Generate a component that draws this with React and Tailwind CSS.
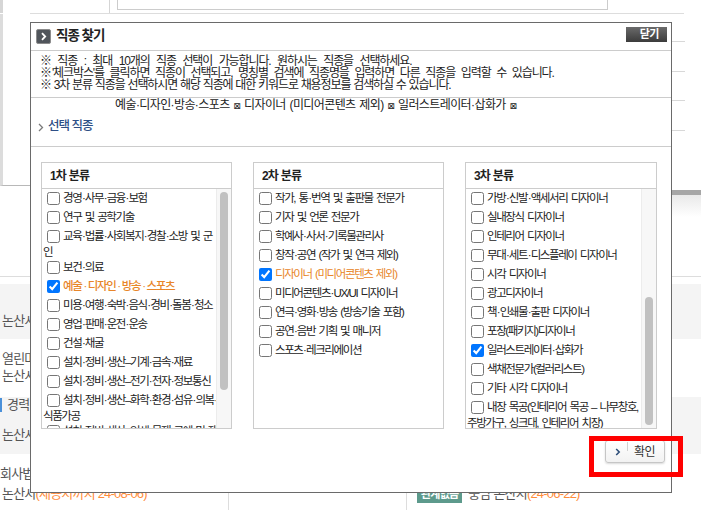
import React from "react";

const FONT = "font-['Liberation_Sans','Noto_Sans_CJK_KR',sans-serif]";

const D = () => <span className="mx-[0.5px]">·</span>;
const DW = () => <span className="mx-[2px]">·</span>;

function fmt(s) {
  if (typeof s !== "string") return s;
  const parts = s.split("·");
  const out = [];
  parts.forEach((p, i) => {
    if (i > 0) out.push(<D key={"d" + i} />);
    out.push(p);
  });
  return out;
}

function Item({ label, label2, checked, orange }) {
  return (
    <div className="leading-[12px] whitespace-nowrap">
      <input
        type="checkbox"
        defaultChecked={checked}
        className="align-middle w-[13px] h-[13px] mt-[3px] mb-[3px] ml-[4px] mr-[3px]"
      />
      <span className={orange ? "text-[#e8862a]" : "text-[#222]"}>
        {fmt(label)}
        {label2 && (
          <>
            <br />
            {fmt(label2)}
          </>
        )}
      </span>
    </div>
  );
}

function Panel({ title, items, width, thumb }) {
  return (
    <div className={`${width} h-[267px] border border-[#cccccc] flex flex-col bg-white`}>
      <div className="h-[26px] shrink-0 border-b border-[#cccccc] flex items-center pl-[8px] text-[12px] font-bold text-[#222] tracking-[-0.8px]">
        {title}
      </div>
      <div className="flex-1 flex min-h-0">
        <div className="flex-1 overflow-hidden text-[11.5px] tracking-[-1.4px] [word-spacing:1.5px] pl-[1px]">
          {items.map((it, i) => (
            <Item key={i} {...it} />
          ))}
        </div>
        {thumb && (
          <div className="w-[15px] shrink-0 bg-[#f7f7f7] border-l border-[#ececec] flex justify-center">
            <div className={`w-[8px] rounded-full bg-[#c1c1c1] ${thumb}`} />
          </div>
        )}
      </div>
    </div>
  );
}

const p1 = [
  { label: "경영·사무·금융·보험" },
  { label: "연구 및 공학기술" },
  { label: "교육·법률·사회복지·경찰·소방 및 군", label2: "인" },
  { label: "보건·의료" },
  {
    label: (
      <span className="font-medium">
        예술<DW />디자인<DW />방송<DW />스포츠
      </span>
    ),
    checked: true,
    orange: true,
  },
  { label: "미용·여행·숙박·음식·경비·돌봄·청소" },
  { label: "영업·판매·운전·운송" },
  { label: "건설·채굴" },
  { label: "설치·정비·생산–기계·금속·재료" },
  { label: "설치·정비·생산–전기·전자·정보통신" },
  { label: "설치·정비·생산–화학·환경·섬유·의복·", label2: "식품가공" },
  { label: "설치·정비·생산–인쇄·목재·공예 및 제조" },
];

const p2 = [
  { label: "작가, 통·번역 및 출판물 전문가" },
  { label: "기자 및 언론 전문가" },
  { label: "학예사·사서·기록물관리사" },
  { label: "창작·공연 (작가 및 연극 제외)" },
  { label: "디자이너 (미디어콘텐츠 제외)", checked: true, orange: true },
  { label: "미디어콘텐츠·UX/UI 디자이너" },
  { label: "연극·영화·방송 (방송기술 포함)" },
  { label: "공연·음반 기획 및 매니저" },
  { label: "스포츠·레크리에이션" },
];

const p3 = [
  { label: "가방·신발·액세서리 디자이너" },
  { label: "실내장식 디자이너" },
  { label: "인테리어 디자이너" },
  { label: "무대·세트·디스플레이 디자이너" },
  { label: "시각 디자이너" },
  { label: "광고디자이너" },
  { label: "책·인쇄물·출판 디자이너" },
  { label: "포장(패키지)디자이너" },
  { label: "일러스트레이터·삽화가", checked: true },
  { label: "색채전문가(컬러리스트)" },
  { label: "기타 시각 디자이너" },
  { label: "내장 목공(인테리어 목공 – 나무창호,", label2: "주방가구, 싱크대, 인테리어 치장)" },
];

function Background() {
  return (
    <div className="flex flex-col w-[701px] h-[510px] text-[13px] text-[#555] tracking-[-0.8px]">
      {/* top strip */}
      <div className="h-[13px] flex shrink-0">
        <div className="w-[110px] h-full border-r border-[#d5d5d5] border-l-[3px] border-l-[#d6d6d6]" />
        <div className="ml-[7px] w-[491px] h-[10px] border-x border-b border-[#cccccc]" />
      </div>
      <div className="h-[1px] ml-[30px] w-[654px] bg-[#dddddd] shrink-0" />
      {/* upper area */}
      <div className="h-[172px] flex shrink-0">
        <div className="w-[30px] h-full border-l-[3px] border-[#dcdcdc] border-b border-b-[#b8b8b8]" />
        <div className="ml-auto w-[30px] flex flex-col">
          <div className="w-[14px] h-[28px] border-b border-[#d8d8d8]" />
          <div className="w-[14px] h-[30px] border-b border-[#d8d8d8]" />
          <div className="w-[14px] h-[29px] border-b border-[#d8d8d8]" />
          <div className="w-[14px] h-[30px] border-b border-[#d8d8d8]" />
        </div>
      </div>
      <div className="h-[91px] flex shrink-0 border-b border-[#dddddd]">
        <div className="ml-auto w-[30px] flex flex-col">
          <div className="mt-[4px] h-[5px] bg-[#a6a6a6]" />
          <div className="h-[22px] bg-gradient-to-b from-[#e9e9e9] to-white" />
        </div>
      </div>
      <div className="h-[7px] shrink-0" />
      <div className="h-[55px] shrink-0 bg-[#f4f4f4] pt-[29px] pl-[2px] leading-[16px]">논산시</div>
      <div className="h-[58px] shrink-0 pt-[11px] pl-[2px] leading-[17px]">
        <div>열린마</div>
        <div>논산시</div>
      </div>
      <div className="h-[57px] shrink-0 bg-[#f4f4f4] leading-[16px]">
        <div className="flex items-center">
          <div className="w-[2px] h-[14px] bg-[#4a90d9]" />
          <span className="ml-[5px]">경력직</span>
        </div>
        <div className="mt-[14px] pl-[2px]">논산시</div>
      </div>
      <div className="flex-1 flex">
        <div className="w-[229px] border-r border-[#dddddd] pt-[10px] leading-[20px]">
          <div>회사법</div>
          <div className="pl-[2px]">
            논산시<span className="text-[#ff8c3a]">(채용시까지 24-08-06)</span>
          </div>
        </div>
        <div className="w-[178px] border-r border-[#dddddd]" />
        <div className="pt-[30px] pl-[10px] leading-[20px] flex items-center self-start">
          <span className="bg-[#5d9a8c] text-white text-[11px] font-bold px-[4px] leading-[17px]">
            관계없음
          </span>
          <span className="ml-[6px]">
            충남 논산시<span className="text-[#ff8c3a]">(24-06-22)</span>
          </span>
        </div>
      </div>
    </div>
  );
}

const X = () => <span className="font-['DejaVu_Sans'] text-[9px]">⊠</span>;

export default function App() {
  return (
    <div className={`relative w-[701px] h-[510px] overflow-hidden bg-white ${FONT}`}>
      <Background />

      {/* Modal */}
      <div className="absolute left-[30px] top-[22px] w-[642px] h-[471px] border border-[#6a6a6a] bg-white flex flex-col">
        {/* header */}
        <div className="h-[28px] shrink-0 border-b border-[#cccccc] flex items-center pl-[5px] pr-[4px]">
          <svg width="15" height="15" viewBox="0 0 15 15" className="shrink-0">
            <rect x="0.5" y="0.5" width="14" height="14" rx="1.5" fill="#50555b" stroke="#8c8c8c" />
            <path d="M6 4.2 L9.2 7.5 L6 10.8" fill="none" stroke="#ffffff" strokeWidth="1.8" />
          </svg>
          <span className="ml-[5px] text-[13.5px] font-bold text-[#222] tracking-[-1px]">직종 찾기</span>
          <div className="ml-auto self-start mt-[4px] w-[41px] h-[15px] bg-gradient-to-b from-[#6b6b6b] to-[#3c3c3c] flex items-center justify-end pr-[8px] text-white text-[11px] font-bold leading-none tracking-[-0.5px]">
            닫기
          </div>
        </div>

        {/* notice */}
        <div className="shrink-0 border-b border-[#cccccc] pt-[4px] pb-[6px] pl-[9px] text-[12px] leading-[12px] text-[#222] tracking-[-1.1px]">
          <div className="[word-spacing:4.2px]">※ 직종 : 최대 10개의 직종 선택이 가능합니다. 원하시는 직종을 선택하세요.</div>
          <div className="[word-spacing:3.4px]">
            <span className="mr-[1px]">※</span>'체크박스'를 클릭하면 직종이 선택되고, 명칭별 검색에 직종명을 입력하면 다른 직종을 입력할 수 있습니다.
          </div>
          <div className="[word-spacing:0.6px]">※ 3차 분류 직종을 선택하시면 해당 직종에 대한 키워드로 채용정보를 검색하실 수 있습니다.</div>
        </div>

        {/* selected */}
        <div className="h-[49px] shrink-0 border-b border-[#cccccc]">
          <div className="pt-[1px] pl-[84px] text-[12px] leading-[12px] text-[#222] tracking-[-0.6px] [word-spacing:1px]">
            예술·디자인·방송·스포츠 <X /> 디자이너 (미디어콘텐츠 제외) <X /> 일러스트레이터·삽화가 <X />
          </div>
          <div className="mt-[7px] pl-[7px] flex items-center leading-[14px]">
            <svg width="6" height="9" viewBox="0 0 6 9" className="mt-[2px]">
              <path d="M1 1 L4.5 4.5 L1 8" fill="none" stroke="#7a7a7a" strokeWidth="1.3" />
            </svg>
            <span className="ml-[4px] text-[12.5px] font-medium text-[#2e4f86] tracking-[-1px]">선택 직종</span>
          </div>
        </div>

        {/* panels */}
        <div className="flex-1 flex flex-col">
          <div className="flex gap-[21px] pt-[15px] pl-[10px]">
            <Panel title="1차 분류" items={p1} width="w-[191px]" thumb="mt-[3px] h-[198px]" />
            <Panel title="2차 분류" items={p2} width="w-[191px]" />
            <Panel title="3차 분류" items={p3} width="w-[192px]" thumb="mt-[108px] h-[128px]" />
          </div>
          <div className="flex justify-end pr-[6px] mt-[11px]">
            <div className="w-[60px] h-[23px] border border-[#c6c6c6] rounded-[3px] bg-gradient-to-b from-white to-[#f2f2f2] shadow-[0_1px_2px_rgba(0,0,0,0.15)] flex items-center">
              <svg width="6" height="8" viewBox="0 0 6 8" className="ml-[9px]">
                <path d="M1.2 1 L4.2 4 L1.2 7" fill="none" stroke="#2f4f7a" strokeWidth="1.6" />
              </svg>
              <div className="ml-[6px] self-start mt-[1px] w-[1px] h-[9px] bg-[#d0d0d0]" />
              <span className="ml-[6px] text-[12px] text-[#333] leading-none tracking-[-0.5px]">확인</span>
            </div>
          </div>
        </div>
      </div>

      {/* red highlight */}
      <div className="absolute left-[589px] top-[436px] w-[94px] h-[41px] border-[5px] border-[#ff0000] pointer-events-none" />
    </div>
  );
}
